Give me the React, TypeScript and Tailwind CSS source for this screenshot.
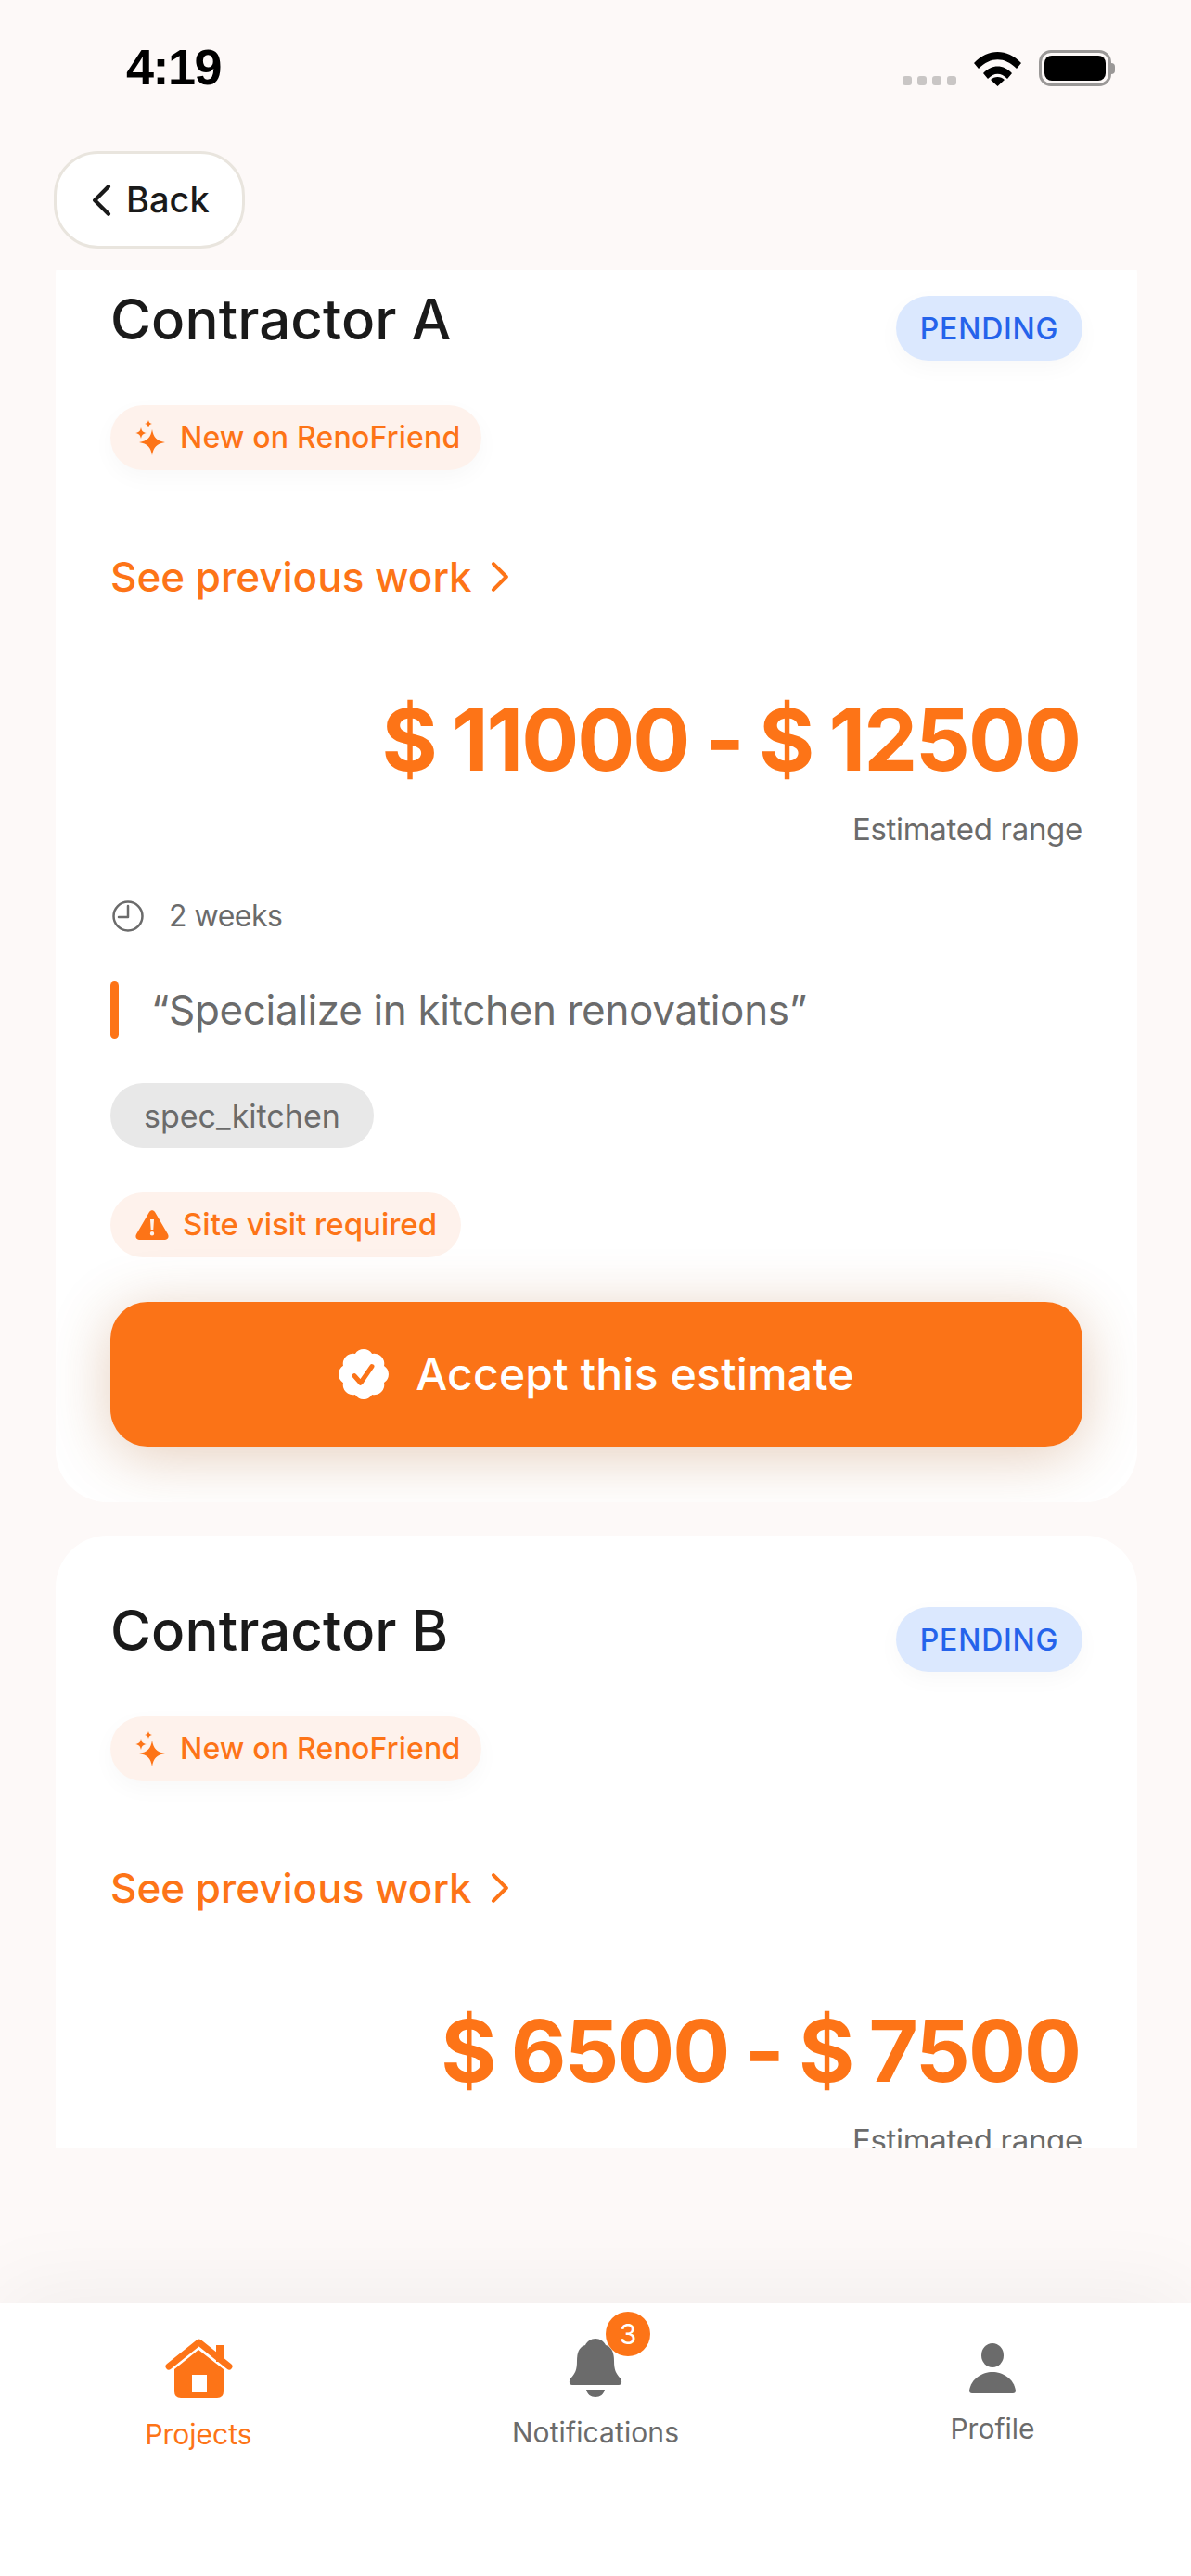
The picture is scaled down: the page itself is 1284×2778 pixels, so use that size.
import React from "react";

const Sparkle = () => (
  <svg width="33" height="38" viewBox="0 0 33 38" className="shrink-0" fill="#fd7417">
    <path d="M18 10 C19.500 19 23 22.500 32 24 C23 25.500 19.500 29 18 38 C16.500 29 13 25.500 4 24 C13 22.500 16.500 19 18 10Z" />
    <path d="M6 8 C6.800 12 8 13.200 12 14 C8 14.800 6.800 16 6 20 C5.200 16 4 14.800 0 14 C4 13.200 5.200 12 6 8Z" />
    <path d="M14 0 C14.500 2.500 15.500 3.500 18 4 C15.500 4.500 14.500 5.500 14 8 C13.500 5.500 12.500 4.500 10 4 C12.500 3.500 13.500 2.500 14 0Z" />
  </svg>
);

const Chevron = ({ dir, color, size, w }: { dir: "l" | "r"; color: string; size: number; w: number }) => (
  <svg width={size * 0.62} height={size} viewBox="0 0 20 32" fill="none" stroke={color} strokeWidth={w} strokeLinecap="round" strokeLinejoin="round" className="shrink-0">
    <path d={dir === "l" ? "M17 2 L3 16 L17 30" : "M3 2 L17 16 L3 30"} />
  </svg>
);

const Clock = () => (
  <svg width="36" height="36" viewBox="0 0 36 36" fill="none" stroke="#6b6b6b" strokeWidth="2.500" className="ml-[1px] shrink-0">
    <circle cx="18" cy="18" r="15.500" />
    <path d="M18 7 V19 H8" strokeLinecap="round" strokeLinejoin="round" />
  </svg>
);

const Warning = () => (
  <svg width="36" height="32" viewBox="0 0 36 32" className="shrink-0">
    <path fillRule="evenodd" fill="#fd7417" d="M15 2 C16.500 -0.500 19.500 -0.500 21 2 L35 26 C36.500 29 35 32 32 32 L4 32 C1 32 -0.500 29 1 26Z M16 10 L16.700 21 L19.300 21 L20 10Z M18 23 A2.200 2.200 0 1 0 18 27.400 A2.200 2.200 0 1 0 18 23Z" />
  </svg>
);

const Badge = () => (
  <svg width="54" height="54" viewBox="2 2 20 20" className="shrink-0">
    <path fill="#fff" d="M3.850 8.620a4 4 0 0 1 4.780-4.770 4 4 0 0 1 6.740 0 4 4 0 0 1 4.780 4.780 4 4 0 0 1 0 6.740 4 4 0 0 1-4.770 4.780 4 4 0 0 1-6.750 0 4 4 0 0 1-4.780-4.770 4 4 0 0 1 0-6.760Z" />
    <path fill="none" stroke="#fb7317" strokeWidth="1.900" strokeLinecap="round" strokeLinejoin="round" d="M8.300 12.600 L10.800 15.400 L15.300 8.900" />
  </svg>
);

const Contractor = ({ name, price }: { name: string; price: string }) => (
  <section className="shrink-0 overflow-hidden rounded-[56px] bg-white px-[59px] py-[60px]">
    <div className="flex items-start justify-between">
      <h2 className="text-[60px] leading-[84px] font-medium tracking-[0.1px] text-[#1a1a1a]">{name}</h2>
      <span className="mt-[17px] flex h-[70px] w-[201px] items-center justify-center rounded-full bg-[#dbe8fe] pt-[2px] text-[32px] font-medium tracking-[0.8px] text-[#2563eb] shadow-[0_8px_24px_rgba(0,0,0,0.03)]">PENDING</span>
    </div>
    <div className="mt-[48px] flex h-[70px] w-fit items-center gap-[15px] rounded-full bg-[#fef2ec] pl-[27px] pr-[23px] text-[32px] font-medium tracking-[0.2px] text-[#fd7417] shadow-[0_8px_24px_rgba(0,0,0,0.03)]">
      <Sparkle />
      <span>New on RenoFriend</span>
    </div>
    <div className="mt-[85px] flex h-[60px] items-center gap-[20px] text-[44px] font-medium text-[#fd7417]">
      <span>See previous work</span>
      <Chevron dir="r" color="#fd7417" size={32} w={4} />
    </div>
    <p className="mt-[91px] pr-[3px] text-right text-[92px] leading-[110px] font-bold tracking-[-2px] [word-spacing:-2.5px] text-[#fd7417]">{price}</p>
    <p className="mt-[19px] text-right text-[33px] leading-[44px] tracking-[-0.3px] text-[#6b6b6b]">Estimated range</p>
    <div className="mt-[50px] flex h-[44px] items-center gap-[26px] text-[32px] tracking-[-0.5px] text-[#6b6b6b]">
      <Clock />
      <span>2 weeks</span>
    </div>
    <div className="mt-[48px] flex h-[62px] items-center gap-[35px]">
      <div className="h-full w-[9px] rounded-full bg-[#fd7417]" />
      <p className="text-[44px] tracking-[-0.35px] text-[#6b6b6b]">“Specialize in kitchen renovations”</p>
    </div>
    <div className="mt-[48px] flex h-[70px] w-fit items-center rounded-full bg-[#e8e8e8] px-[36px] text-[34px] text-[#6b6b6b]">spec_kitchen</div>
    <div className="mt-[48px] flex h-[70px] w-fit items-center gap-[15px] rounded-full bg-[#fef2ec] pl-[27px] pr-[26px] text-[33px] font-medium text-[#fd7417]">
      <Warning />
      <span>Site visit required</span>
    </div>
    <button className="mt-[48px] flex h-[156px] w-full items-center justify-center gap-[29px] rounded-[40px] bg-[#fb7317] text-[48px] font-medium tracking-[0.2px] text-white shadow-[0_10px_64px_rgba(170,90,30,0.3)]">
      <Badge />
      <span>Accept this estimate</span>
    </button>
  </section>
);

export default function App() {
  return (
    <div className="flex h-[2778px] w-[1284px] flex-col overflow-hidden bg-[#fdf9f8] font-['Inter','Noto_Sans',sans-serif]">
      <header className="flex h-[163px] items-start justify-between pl-[136px] pr-[82px] pt-[44px]">
        <span className="font-['Liberation_Sans',sans-serif] text-[54px] leading-[56px] font-bold tracking-[-1.5px] text-black">4:19</span>
        <div className="mt-[10px] flex items-end">
          <div className="mb-[1px] flex gap-[6px]">
            <span className="h-[10px] w-[10px] rounded-[3px] bg-[#c9c6c5]" />
            <span className="h-[10px] w-[10px] rounded-[3px] bg-[#c9c6c5]" />
            <span className="h-[10px] w-[10px] rounded-[3px] bg-[#c9c6c5]" />
            <span className="h-[10px] w-[10px] rounded-[3px] bg-[#c9c6c5]" />
          </div>
          <svg width="51" height="37" viewBox="0 0 51 37" className="ml-[19px]">
            <path d="M0 12 C15 -4 36 -4 51 12 L46 18 C33 5 18 5 5 18Z M10 23 C19 13 32 13 41 23 L36 29 C29 22 22 22 15 29Z M18 30 C22 26 29 26 33 30 L25.500 37Z" fill="#000" />
          </svg>
          <div className="ml-[19px] flex items-center">
            <div className="h-[39px] w-[78px] rounded-[13px] border-[3px] border-[#9a9897] p-[3px]">
              <div className="h-full w-full rounded-[8px] bg-black" />
            </div>
            <div className="h-[12px] w-[4px] rounded-r-full bg-[#9a9897]" />
          </div>
        </div>
      </header>

      <div className="h-[128px] pl-[58px]">
        <button className="flex h-[105px] w-[206px] items-center gap-[16px] rounded-[48px] border-[3px] border-[#e9e5de] bg-white pl-[38px] text-[38px] font-medium text-[#1a1a1a]">
          <Chevron dir="l" color="#1a1a1a" size={34} w={4} />
          <span>Back</span>
        </button>
      </div>

      <main className="h-[2025px] shrink-0 overflow-hidden pl-[60px] pr-[58px]">
        <div className="-mt-[49px] flex flex-col gap-[36px]">
          <Contractor name="Contractor A" price="$ 11000 - $ 12500" />
          <Contractor name="Contractor B" price="$ 6500 - $ 7500" />
        </div>
      </main>

      <div className="flex-1" />

      <nav className="flex h-[294px] shrink-0 bg-white shadow-[0_-12px_90px_rgba(0,0,0,0.05)]">
        <div className="flex flex-1 flex-col items-center pt-[38px] text-[30px] text-[#fd7417]">
          <svg width="73" height="64" viewBox="0 0 73 64">
            <path fillRule="evenodd" fill="#fd7417" d="M10 33 L36 12 L63 33 V57 Q63 64 56 64 H17 Q10 64 10 57Z M29 39 V58 H45 V39Z" />
            <path d="M55 7 H64 V25 H55Z" fill="#fd7417" />
            <path d="M4 30 L36.500 4 L69 30" fill="none" stroke="#fd7417" strokeWidth="7" strokeLinecap="round" strokeLinejoin="round" />
          </svg>
          <span className="mt-[20px] leading-[38px]">Projects</span>
        </div>
        <div className="flex flex-1 flex-col items-center pt-[38px] text-[30px] tracking-[0.1px] text-[#6b6b6b]">
          <div className="relative h-[63px] w-[58px]">
            <svg width="58" height="63" viewBox="0 0 58 63">
              <path fill="#6b6b6b" d="M29 0 C24 0 20 3 18 7 C11 9 9 16 9 24 C9 34 7 37 3 42 C0 45 0 50 4 50 L54 50 C58 50 58 45 55 42 C51 37 49 34 49 24 C49 16 47 9 40 7 C38 3 34 0 29 0Z M19 55 L39 55 C38 60 34 63 29 63 C24 63 20 60 19 55Z" />
            </svg>
            <span className="absolute -top-[29px] left-[40px] flex h-[48px] w-[48px] items-center justify-center rounded-full bg-[#fd7417] text-[30px] text-white">3</span>
          </div>
          <span className="mt-[19px] leading-[38px]">Notifications</span>
        </div>
        <div className="flex flex-1 flex-col items-center pt-[43px] text-[30px] text-[#6b6b6b]">
          <svg width="50" height="54" viewBox="0 0 50 54">
            <ellipse cx="25" cy="13" rx="12" ry="13" fill="#6b6b6b" />
            <path fill="#6b6b6b" d="M0 51 C2 38 14 31 25 31 C36 31 48 38 50 51 Q50 54 47 54 L3 54 Q0 54 0 51Z" />
          </svg>
          <span className="mt-[19px] leading-[38px]">Profile</span>
        </div>
      </nav>
    </div>
  );
}
